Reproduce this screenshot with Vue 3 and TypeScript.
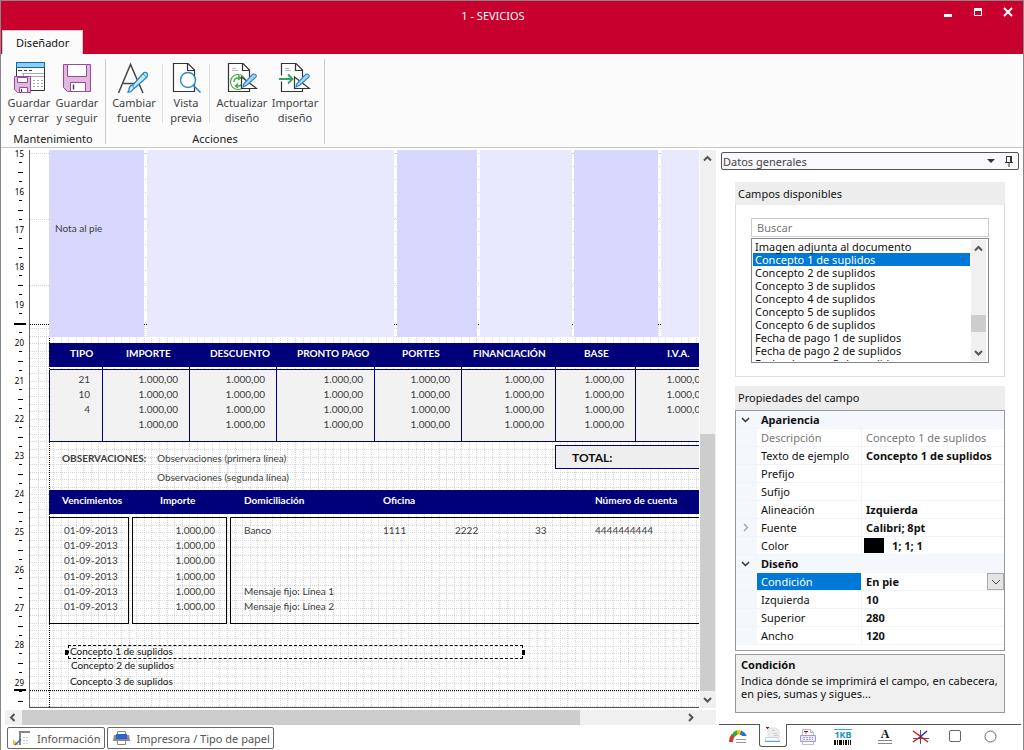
<script setup lang="ts">
import { ref } from 'vue'

interface TaxColumn { label: string; width: number; inset: number; values: string[] }
interface Label { text: string; x: number; y: number; kind?: string }
interface Prop { name: string; value: string; kind?: string }
interface Section { title: string; rows: Prop[] }

const CM = 37.8

const rulerMarks = Array.from({ length: 15 }, (_, i) => ({ n: 15 + i, y: Math.round(4 + i * CM) }))
const gridX = Array.from({ length: 260 }, (_, i) => Math.round(8 + (i * CM) / 5))
const gridY = Array.from({ length: 120 }, (_, i) => Math.round(178 + (i * CM) / 5))

const bands = [
  { x: 19, w: 95, deep: true },
  { x: 117, w: 247, deep: false },
  { x: 367, w: 80, deep: true },
  { x: 450, w: 92, deep: false },
  { x: 544, w: 84, deep: true },
  { x: 631, w: 90, deep: false },
]
const gaps = [115, 365, 448, 543, 629]

const four = ['1.000,00', '1.000,00', '1.000,00', '1.000,00']
const taxColumns: TaxColumn[] = [
  { label: 'TIPO', width: 53, inset: 21, values: ['21', '10', '4', ''] },
  { label: 'IMPORTE', width: 87, inset: 24, values: four },
  { label: 'DESCUENTO', width: 87, inset: 21, values: four },
  { label: 'PRONTO PAGO', width: 98, inset: 21, values: four },
  { label: 'PORTES', width: 87, inset: 28, values: four },
  { label: 'FINANCIACIÓN', width: 94, inset: 12, values: four },
  { label: 'BASE', width: 80, inset: 29, values: four },
  { label: 'I.V.A.', width: 82, inset: 32, values: ['1.000,00', '1.000,00', '1.000,00', ''] },
]

const labels: Label[] = [
  { text: 'Nota al pie', x: 25, y: 71 },
  { text: 'OBSERVACIONES:', x: 32, y: 301, kind: 'bold' },
  { text: 'Observaciones (primera línea)', x: 127, y: 301 },
  { text: 'Observaciones (segunda línea)', x: 127, y: 320 },
  { text: 'Vencimientos', x: 32, y: 343, kind: 'head' },
  { text: 'Importe', x: 130, y: 343, kind: 'head' },
  { text: 'Domiciliación', x: 214, y: 343, kind: 'head' },
  { text: 'Oficina', x: 353, y: 343, kind: 'head' },
  { text: 'Número de cuenta', x: 565, y: 343, kind: 'head' },
  { text: 'Banco', x: 214, y: 373 },
  { text: '1111', x: 353, y: 373 },
  { text: '2222', x: 425, y: 373 },
  { text: '33', x: 505, y: 373 },
  { text: '4444444444', x: 565, y: 373 },
  { text: 'Mensaje fijo: Línea 1', x: 214, y: 434 },
  { text: 'Mensaje fijo: Línea 2', x: 214, y: 449 },
  { text: 'Concepto 2 de suplidos', x: 41, y: 508, kind: 'ink' },
  { text: 'Concepto 3 de suplidos', x: 40, y: 524, kind: 'ink' },
]

const fields = [
  'Imagen adjunta al documento',
  'Concepto 1 de suplidos',
  'Concepto 2 de suplidos',
  'Concepto 3 de suplidos',
  'Concepto 4 de suplidos',
  'Concepto 5 de suplidos',
  'Concepto 6 de suplidos',
  'Fecha de pago 1 de suplidos',
  'Fecha de pago 2 de suplidos',
  'Fecha de pago 3 de suplidos',
]
const selected = ref(1)
const search = ref('')

const sections: Section[] = [
  {
    title: 'Apariencia',
    rows: [
      { name: 'Descripción', value: 'Concepto 1 de suplidos', kind: 'muted' },
      { name: 'Texto de ejemplo', value: 'Concepto 1 de suplidos' },
      { name: 'Prefijo', value: '' },
      { name: 'Sufijo', value: '' },
      { name: 'Alineación', value: 'Izquierda' },
      { name: 'Fuente', value: 'Calibri; 8pt', kind: 'nested' },
      { name: 'Color', value: '1; 1; 1', kind: 'color' },
    ],
  },
  {
    title: 'Diseño',
    rows: [
      { name: 'Condición', value: 'En pie', kind: 'active' },
      { name: 'Izquierda', value: '10' },
      { name: 'Superior', value: '280' },
      { name: 'Ancho', value: '120' },
    ],
  },
]
</script>

<template>
  <div class="window">
    <header class="titlebar">
      <h1 class="title">1 - SEVICIOS</h1>
      <div class="controls">
        <button aria-label="Minimizar"><svg width="12" height="12"><path d="M2 8h8v3H2z" fill="#fff" /></svg></button>
        <button aria-label="Maximizar"><svg width="12" height="12"><path d="M2.500 2.500h7v7h-7z" fill="none" stroke="#fff" /><path d="M2 2h8v3H2z" fill="#fff" /></svg></button>
        <button aria-label="Cerrar"><svg width="12" height="12"><path d="M2 2l8 8M10 2l-8 8" stroke="#fff" stroke-width="2" /></svg></button>
      </div>
      <button class="tab">Diseñador</button>
    </header>

    <nav class="ribbon">
      <section class="group">
        <div class="tools">
          <button class="tool">
            <svg class="icon" viewBox="0 0 32 32">
              <path d="M3.500 .5h28v28h-28z" fill="#fff" stroke="#333" />
              <path d="M3.500 .5h28v5h-28z" fill="#8fcdf2" stroke="#0b6cb5" />
              <path d="M5 8.500h4M11 8.500h3M16 8.500h3" stroke="#333" />
              <path d="M9 11.500h22M10.500 11v4M11 14.500h20" stroke="#aaa" />
              <path d="M20 18.500h2M24 18.500h2M28 18.500h2M20 21.500h2M24 21.500h2M28 21.500h2M20 24.500h2M24 24.500h2M28 24.500h2" stroke="#aaa" />
              <path d="M1.500 14.500h16v16H4.500l-3-3z" fill="#deb9dd" stroke="#994a9e" />
              <path d="M4.500 15.500h10v5h-10zM6.500 25.500h8v5h-8z" fill="#fff" stroke="#994a9e" />
              <path d="M8.500 27v3" stroke="#444" />
            </svg>
            <span>Guardar<br />y cerrar</span>
          </button>
          <button class="tool">
            <svg class="icon" viewBox="0 0 32 32">
              <path d="M2.500 2.500h27v27H6.500l-4-4z" fill="#deb9dd" stroke="#994a9e" />
              <path d="M6.500 2.500h19v12h-19zM9.500 20.500h15v9h-15z" fill="#fff" stroke="#994a9e" />
              <path d="M12.500 22.500v5" stroke="#444" stroke-width="1.500" />
            </svg>
            <span>Guardar<br />y seguir</span>
          </button>
        </div>
        <h2 class="caption">Mantenimiento</h2>
      </section>
      <section class="group">
        <div class="tools">
          <button class="tool">
            <svg class="icon" viewBox="0 0 32 32">
              <path d="M.5 31L12.500 2.500 25 31M5.500 21.500h15" fill="none" stroke="#444" stroke-width="1.500" />
              <path d="M27.500 10.500q3 .5 1.500 4.500L15 27.500q-2 3-5 2.500 1-1 1-3 1-4 4-4L25 11.500q1-1.500 2.500-1z" fill="#cfe8fa" stroke="#2b88cf" stroke-width="1.300" />
              <path d="M14.500 23.500l2 3M25 12l3.500 3" stroke="#2b88cf" />
            </svg>
            <span>Cambiar<br />fuente</span>
          </button>
          <i class="thin"></i>
          <button class="tool narrow">
            <svg class="icon" viewBox="0 0 32 32">
              <path d="M3.500 1.500H18L24.500 8v21.500h-21zM17.500 1.500v7h7" fill="#fff" stroke="#333" stroke-width="1.200" />
              <circle cx="18" cy="18" r="7.500" fill="#fff" stroke="#2b88cf" stroke-width="1.400" />
              <path d="M23.500 23.500l7 7" stroke="#2b88cf" stroke-width="1.600" />
            </svg>
            <span>Vista<br />previa</span>
          </button>
          <i class="thin"></i>
          <button class="tool wide">
            <svg class="icon" viewBox="0 0 32 32">
              <path d="M2.500 1.500H17L23.500 8v21.500h-21zM16.500 1.500v7h7" fill="#fff" stroke="#333" stroke-width="1.200" />
              <path d="M6 6.500h4M6 8.500h6" stroke="#bbb" />
              <circle cx="12" cy="20" r="7.500" fill="#fff" stroke="#45aa45" stroke-width="1.200" />
              <path d="M8 20q0-4 4-4h2M12 13.500l2.500 2.500-2.500 2M16 20q0 4-4 4h-2M12 21.500L9.500 24l2.500 2" fill="none" stroke="#45aa45" stroke-width="1.400" />
              <path d="M15.500 15v11.500h15z" fill="#fff" stroke="#333" stroke-width="1.200" />
              <path d="M28 12q3 .5 2 3L21 23q-2 1-4 2 0-3 2-4.500l7-7.500q.5-1 2-1z" fill="#a9d5f5" stroke="#2b88cf" stroke-width="1.200" />
            </svg>
            <span>Actualizar<br />diseño</span>
          </button>
          <button class="tool">
            <svg class="icon" viewBox="0 0 32 32">
              <path d="M2.500 1.500H17L23.500 8v21.500h-21zM16.500 1.500v7h7" fill="#fff" stroke="#333" stroke-width="1.200" />
              <path d="M6 6.500h4M6 8.500h6" stroke="#bbb" />
              <path d="M0 13.500h9v6H0z" fill="#fff" />
              <path d="M0 17h13M9 12.500l4.500 4.500L9 21.500" fill="none" stroke="#35a265" stroke-width="1.900" />
              <path d="M15.500 15v11.500h15z" fill="#fff" stroke="#333" stroke-width="1.200" />
              <path d="M28 12q3 .5 2 3L21 23q-2 1-4 2 0-3 2-4.500l7-7.500q.5-1 2-1z" fill="#a9d5f5" stroke="#2b88cf" stroke-width="1.200" />
            </svg>
            <span>Importar<br />diseño</span>
          </button>
        </div>
        <h2 class="caption">Acciones</h2>
      </section>
    </nav>

    <main class="work">
      <section class="designer">
        <div class="sheet">
          <svg class="ruler" shape-rendering="crispEdges">
            <g v-for="m in rulerMarks" :key="m.n">
              <text x="23" :y="m.y + 3" text-anchor="end">{{ m.n }}</text>
              <path :d="`M18 ${m.y + 8}h3v1h-3zM17 ${m.y + 18}h5v1h-5zM18 ${m.y + 27}h3v1h-3z`" />
            </g>
            <path d="M13 173h12v2H13zM13 539h12v2H13z" />
          </svg>

          <div class="canvas">
            <svg class="grid" shape-rendering="crispEdges">
              <line v-for="y in [3, 69, 135]" :key="'r' + y" x1="0" x2="100%" :y1="y + 0.5" :y2="y + 0.5" class="dot" />
              <line v-for="x in gaps" :key="'g' + x" :x1="x + 0.5" :x2="x + 0.5" y1="3" y2="174" class="sparse" />
              <line v-for="x in gridX" :key="'x' + x" :x1="x + 0.5" :x2="x + 0.5" y1="176" y2="100%" class="dot" />
              <line v-for="y in gridY" :key="'y' + y" x1="0" x2="100%" :y1="y + 0.5" :y2="y + 0.5" class="dot" />
              <line x1="0" x2="100%" y1="174.5" y2="174.5" class="edge" />
              <line x1="0" x2="100%" y1="540.5" y2="540.5" class="edge" />
              <line x1="19.5" x2="19.5" y1="174" y2="100%" class="edge" />
            </svg>

            <div v-for="b in bands" :key="b.x" class="band" :class="{ deep: b.deep }" :style="{ left: b.x + 'px', width: b.w + 'px' }"></div>

            <table class="taxes">
              <colgroup><col v-for="c in taxColumns" :key="c.label" :style="{ width: c.width + 'px' }" /></colgroup>
              <thead>
                <tr>
                  <th v-for="c in taxColumns" :key="c.label" :style="{ paddingLeft: c.inset + 'px' }">{{ c.label }}</th>
                </tr>
              </thead>
              <tbody>
                <tr class="joint"><td v-for="c in taxColumns" :key="c.label"></td></tr>
                <tr v-for="r in 4" :key="r">
                  <td v-for="c in taxColumns" :key="c.label">{{ c.values[r - 1] }}</td>
                </tr>
              </tbody>
            </table>

            <div class="total">TOTAL:</div>
            <div class="bar"></div>
            <div class="boxes">
              <ul class="box dates"><li v-for="n in 6" :key="n">01-09-2013</li></ul>
              <ul class="box amounts"><li v-for="n in 6" :key="n">1.000,00</li></ul>
              <div class="box rest"></div>
            </div>

            <span v-for="l in labels" :key="l.text" class="label" :class="l.kind" :style="{ left: l.x + 'px', top: l.y + 'px' }">{{ l.text }}</span>

            <div class="picked">Concepto 1 de suplidos</div>
          </div>

          <div class="vscroll">
            <svg width="15" height="17"><path d="M4 10.500L7.500 7l3.500 3.500" class="chev" /></svg>
            <div class="vtrack"><div class="vthumb"></div></div>
            <svg width="15" height="17"><path d="M4 7l3.500 3.500L11 7" class="chev" /></svg>
          </div>
        </div>

        <div class="hscroll">
          <svg width="17" height="15"><path d="M9.500 4L6 7.500 9.500 11" class="chev" /></svg>
          <div class="htrack"><div class="hthumb"></div></div>
          <svg width="17" height="15"><path d="M7 4l3.500 3.500L7 11" class="chev" /></svg>
        </div>

        <div class="sheets">
          <button>
            <svg width="18" height="16" viewBox="0 0 18 16"><path d="M5 1h12v2H8v12H6V3q0-2-1-2z" fill="#888" /><path d="M10 7.500h2M13 7.500h2M10 10.500h2M13 10.500h2M10 13.500h2M13 13.500h2" stroke="#ccc" /><path d="M0 9v6h6z" fill="#f2bd55" /><path d="M2 15l6-6" stroke="#2b6aa5" stroke-width="1.300" /></svg>
            <span>Información</span>
          </button>
          <button>
            <svg width="18" height="16" viewBox="0 0 18 16"><path d="M4.500 1.500h8v4h-8z" fill="#fff" stroke="#888" /><path d="M1 5h15l1 6H0z" fill="#888" /><path d="M3 4h11v5H3z" fill="#2e62cc" /><path d="M4.500 10.500h8v4h-8z" fill="#fff" stroke="#888" /></svg>
            <span>Impresora / Tipo de papel</span>
          </button>
        </div>
      </section>

      <aside class="side">
        <button class="picker">
          <span>Datos generales</span>
          <svg width="32" height="14"><path d="M2 5h8L6 9z" fill="#333" /><path d="M21.500 2v6M26.500 2v6M21 2.500h6M20 8.500h8M24 9v4M25.500 2v6" fill="none" stroke="#333" /></svg>
        </button>

        <section class="panel">
          <h3>Campos disponibles</h3>
          <div class="panel-body">
            <input v-model="search" type="text" placeholder="Buscar" aria-label="Buscar" />
            <div class="listbox">
              <ul role="listbox" aria-label="Campos disponibles">
                <li v-for="(f, i) in fields" :key="f" role="option" :aria-selected="i === selected" :class="{ on: i === selected }" @click="selected = i">{{ f }}</li>
              </ul>
              <div class="vscroll list">
                <svg width="15" height="17"><path d="M4 10.500L7.500 7l3.500 3.500" class="chev" /></svg>
                <div class="vtrack"><div class="lthumb"></div></div>
                <svg width="15" height="17"><path d="M4 7l3.500 3.500L11 7" class="chev" /></svg>
              </div>
            </div>
          </div>
        </section>

        <section class="panel props">
          <h3>Propiedades del campo</h3>
          <table class="pgrid">
            <colgroup><col class="c-gutter" /><col class="c-name" /><col /></colgroup>
            <tbody v-for="s in sections" :key="s.title">
              <tr class="section">
                <td class="gutter"><svg width="9" height="8"><path d="M1 2l3.500 3.500L8 2" fill="none" stroke="#333" stroke-width="1.500" /></svg></td>
                <th colspan="2">{{ s.title }}</th>
              </tr>
              <tr v-for="p in s.rows" :key="p.name" :class="p.kind">
                <td class="gutter"><svg v-if="p.kind === 'nested'" width="9" height="9"><path d="M3 1l3.500 3.500L3 8" fill="none" stroke="#aaa" stroke-width="1.500" /></svg></td>
                <td class="name">{{ p.name }}</td>
                <td class="value">
                  <div class="cell">
                    <i v-if="p.kind === 'color'" class="swatch"></i>
                    <span>{{ p.value }}</span>
                    <button v-if="p.kind === 'active'" class="drop" aria-label="Abrir lista"><svg width="10" height="8"><path d="M1 2l4 4 4-4" fill="none" stroke="#444" /></svg></button>
                  </div>
                </td>
              </tr>
            </tbody>
          </table>
          <div class="help">
            <strong>Condición</strong>
            <p>Indica dónde se imprimirá el campo, en cabecera, en pies, sumas y sigues...</p>
          </div>
        </section>

        <div class="spacer"></div>

        <div class="modes">
          <button aria-label="Datos generales">
            <svg width="18" height="16" viewBox="0 0 18 16"><path d="M2 13q0-4 2-6.500" stroke="#d33" stroke-width="4" fill="none" /><path d="M4 7q2-3 5-4" stroke="#3a3" stroke-width="4" fill="none" /><path d="M8 3.500q2-.5 4 .5" stroke="#fb0" stroke-width="4" fill="none" /><path d="M11.500 3.500q3 1 4.500 4" stroke="#27c" stroke-width="4" fill="none" /><path d="M4 15q0-6 5-8h9v8z" fill="#fff" /><path d="M7 10.500h10M7 13.500h10" stroke="#999" /></svg>
          </button>
          <button class="current" aria-label="Pie">
            <svg width="18" height="18" viewBox="0 0 18 18"><path d="M4 12V2h8l3 3v7z" fill="#eee" stroke="#ddd" /><path d="M2 1.500h3M3.500 1v2" stroke="#c00" /><path d="M8 4.500h3M9 7.500h4M10 9.500h4" stroke="#ccc" /><path d="M1.500 11.500h12l2 3.500H1.500z" fill="#fff" stroke="#c5d5ea" /><path d="M1 15.500h15" stroke="#6f9bd6" /></svg>
          </button>
          <button aria-label="Cuerpo">
            <svg width="18" height="18" viewBox="0 0 18 18"><path d="M3.500 1.500h8l3 3v12h-11zM11.500 1.500v3h3" fill="#fff" stroke="#bbb" /><path d="M5 3.500h4M7 3.500v2" stroke="#c00" /><path d="M1.500 7.500h15v6h-15z" fill="#e8e8ff" stroke="#9a9af0" /><path d="M4 9.500h10M4 11.500h10" stroke="#aaa" stroke-dasharray="2 1" /></svg>
          </button>
          <button class="code" aria-label="Código de barras"><span>1KB</span><svg width="17" height="5"><path d="M0 2.500h17" stroke="#111" stroke-width="5" stroke-dasharray="2 1 1 1 3 1 1 1" /></svg></button>
          <button class="letter" aria-label="Texto"><span>A</span><svg width="14" height="5"><path d="M0 .5h14M0 3.500h14" stroke="#888" /></svg></button>
          <button aria-label="Línea">
            <svg width="18" height="16" viewBox="0 0 18 16"><path d="M1 9.500h16M8.500 1v14" stroke="#555" /><path d="M1 2l7 5" stroke="#c11" stroke-width="1.400" /><path d="M8 7l8 6" stroke="#c11" stroke-width="1.400" /><path d="M15 2L8 8" stroke="#22c" stroke-width="1.400" /><path d="M8 8l-7 5" stroke="#c11" stroke-width="1.400" /></svg>
          </button>
          <button aria-label="Rectángulo"><svg width="13" height="13"><rect x=".5" y=".5" width="11" height="11" rx="1.500" fill="#fff" stroke="#666" /></svg></button>
          <button aria-label="Elipse"><svg width="13" height="13"><circle cx="6.500" cy="6.500" r="5.500" fill="#fff" stroke="#666" /></svg></button>
          <i class="tail"></i>
        </div>
      </aside>
    </main>
  </div>
</template>

<style>
body { margin: 0; background: #fff; }
</style>

<style scoped>
.window, .window * { box-sizing: border-box; }
.window {
  height: 100vh;
  min-height: 750px;
  display: flex;
  flex-direction: column;
  border: 1px solid #888;
  border-bottom: 0;
  background: #fff;
  color: #111;
  font: 11px/15px "Noto Sans", "Open Sans", sans-serif;
}
button { font: inherit; color: inherit; border: 0; padding: 0; background: none; }
h1, h2, h3, p, ul { margin: 0; padding: 0; font-weight: normal; list-style: none; }
svg { display: block; flex: none; }

.titlebar {
  display: grid;
  grid-template-columns: 1fr auto 1fr;
  grid-template-rows: 29px 24px;
  align-items: center;
  background: #c8002d;
}
.title { grid-column: 2; color: #fff; font-size: 11px; margin-right: 38px; }
.controls { grid-column: 3; justify-self: end; align-self: start; display: flex; gap: 18px; padding: 5px 9px 0 0; }
.tab {
  grid-column: 1;
  justify-self: start;
  height: 24px;
  margin-left: 1px;
  padding: 0 13px;
  background: #fbfbfb;
  border: 1px solid #ccc;
  border-width: 1px 1px 0;
}

.ribbon { display: flex; height: 94px; background: #fbfbfb; border-bottom: 1px solid #c6c6c6; padding: 5px 0 3px; flex: none; }
.group { display: flex; flex-direction: column; border-right: 1px solid #ccc; padding: 3px 4px 0; color: #222; }
.group + .group { padding: 3px 0 0; }
.tools { display: flex; }
.tool { width: 48px; color: #444; white-space: nowrap; display: flex; flex-direction: column; align-items: center; gap: 1px; }
.group + .group .tool { width: 56px; }
.group + .group .narrow { width: 46px; }
.group + .group .wide { width: 64px; }
.group + .group .wide + .tool { width: 50px; padding-right: 8px; }
.icon { width: 32px; height: 32px; }
.thin { width: 1px; height: 59px; margin-top: 2px; background: #ddd; }
.caption { font-size: 11px; text-align: center; margin-top: 6px; }

.work { display: flex; flex: 1; min-height: 0; }
.designer { flex: 1; min-width: 0; display: flex; flex-direction: column; padding: 2px 0 1px; }
.sheet { flex: 1; min-height: 0; display: flex; }
.ruler { width: 28px; height: 100%; font: 8px "Noto Sans", sans-serif; overflow: hidden; }
.canvas {
  flex: 1;
  position: relative;
  overflow: hidden;
  border-left: 1px solid #666;
  border-bottom: 1px solid #555;
  color: #404040;
  font: 10px/15px Lato, Carlito, sans-serif;
  white-space: nowrap;
}
.grid { position: absolute; inset: 0; width: 100%; height: 100%; }
.dot { stroke: #d6d6d6; stroke-dasharray: 1 1; }
.sparse { stroke: #ccc; stroke-dasharray: 1 12; }
.edge { stroke: #000; stroke-dasharray: 1 1; }
.band { position: absolute; top: 0; height: 187px; background: #e8e8ff; }
.band.deep { background: #d8d8ff; }

.taxes { position: absolute; left: 19px; top: 193px; width: 668px; table-layout: fixed; border-spacing: 0; }
.taxes th { height: 24px; padding: 0 0 4px; background: #00007b; color: #fff; text-align: left; font-weight: bold; }
.taxes td { height: 15px; padding: 0 11px 0 0; line-height: 15px; border-left: 1px solid #00007b; background: #f2f2f2; text-align: right; vertical-align: top; }
.taxes td:first-child { padding-right: 12px; }
.taxes .joint td { height: 3px; line-height: 0; background: none; border-bottom: 1px solid #00007b; }
.taxes .joint td:first-child { border-left-color: transparent; }
.taxes .joint + tr td { height: 17px; vertical-align: bottom; }
.taxes tbody tr:last-child td { height: 25px; border-bottom: 1px solid #00007b; }

.total { position: absolute; left: 525px; right: -1px; top: 295px; height: 24px; padding-left: 16px; border: 1px solid #00007b; background: #eee; color: #111; font-size: 12px; line-height: 24px; font-weight: bold; }
.bar { position: absolute; left: 19px; right: 0; top: 340px; height: 24px; background: #00007b; }
.boxes { position: absolute; left: 19px; right: -1px; top: 367px; height: 107px; display: flex; gap: 3px; }
.box { border: 1px solid #000; padding-top: 5px; }
.box li:nth-child(4) { margin-top: 1px; }
.dates { width: 80px; padding-left: 14px; }
.amounts { width: 95px; padding-right: 11px; text-align: right; }
.rest { flex: 1; }
.label { position: absolute; }
.bold { font-weight: bold; }
.head { color: #fff; font-weight: bold; }
.ink { color: #111; }
.picked { position: absolute; left: 38px; top: 495px; width: 455px; height: 14px; padding-left: 1px; line-height: 11px; color: #111; border: 1px dashed #000; }
.picked::before, .picked::after { content: ""; position: absolute; top: 4px; width: 3px; height: 5px; background: #000; }
.picked::before { left: -4px; }
.picked::after { right: -3px; }

.chev { fill: none; stroke: #555; stroke-width: 2; }
.vscroll { width: 16px; margin-left: 1px; background: #f0f0f0; display: flex; flex-direction: column; align-items: flex-start; }
.vtrack { flex: 1; width: 15px; display: flex; flex-direction: column; justify-content: flex-end; }
.vthumb { height: 49%; background: #cdcdcd; }
.hscroll { display: flex; height: 15px; margin: 2px 0 0 4px; padding-right: 17px; background: #f0f0f0; }
.htrack { flex: 1; }
.hthumb { width: 84.5%; height: 15px; background: #cdcdcd; }
.sheets { display: flex; gap: 2px; padding: 2px 0 0 6px; color: #555; }
.sheets button { display: flex; align-items: center; gap: 6px; height: 22px; padding: 0 3px 0 5px; border: 1px solid #666; border-radius: 2px; }

.side { width: 307px; display: flex; flex-direction: column; padding: 4px 2px 2px 3px; flex: none; }
.picker { height: 18px; margin: 0 2px; padding: 0 1px; border: 1px solid #555; border-radius: 2px; background: #f8f8fd; color: #444; display: flex; align-items: center; justify-content: space-between; }
.panel { margin: 12px 16px 0; }
.panel h3 { height: 23px; padding-left: 3px; background: #ededed; font-size: 11px; line-height: 24px; }
.panel-body { border: 1px solid #ddd; border-top: 0; height: 172px; padding: 13px 15px 0; }
.panel-body input { display: block; width: 100%; height: 19px; padding: 0 5px; border: 1px solid #ccc; font: inherit; outline: 0; }
.panel-body input::placeholder { color: #777; opacity: 1; }
.listbox { display: flex; height: 125px; margin-top: 1px; border: 1px solid #828790; padding: 1px; }
.listbox ul { flex: 1; overflow: hidden; }
.listbox li { height: 13px; padding-left: 2px; line-height: 13px; white-space: nowrap; }
.listbox .on { background: #0078d7; color: #fff; }
.list { width: 15px; margin-right: 1px; }
.lthumb { height: 17px; margin-bottom: 12px; background: #cdcdcd; }
.panel.props { margin-top: 9px; }
.props h3 { height: 24px; }
.pgrid { width: 100%; table-layout: fixed; border-spacing: 0; border: 1px solid #999; padding-bottom: 5px; }
.pgrid tr > * { height: 18px; padding: 0 0 0 4px; line-height: 17px; text-align: left; white-space: nowrap; border-bottom: 1px solid #f0f3f9; }
.c-gutter { width: 21px; }
.c-name { width: 105px; }
.pgrid .gutter { padding: 0 0 0 5px; background: #f4f7fc; }
.pgrid .section th { background: #f4f7fc; font-weight: bold; }
.pgrid .name { border-right: 1px solid #f0f3f9; }
.pgrid .value { font-weight: bold; }
.pgrid .muted td { color: #777; font-weight: normal; }
.cell { display: flex; align-items: center; height: 17px; }
.swatch { width: 20px; height: 15px; margin: 0 8px 0 -2px; background: #000; }
.active .name { background: #0078d7; color: #fff; }
.drop { margin-left: auto; width: 17px; height: 17px; border: 1px solid #aaa; background: #e4e4e4; display: grid; place-items: center; }
.help { height: 59px; margin-top: 3px; padding: 2px 4px 2px 5px; border: 1px solid #999; background: #f0f0f0; line-height: 13px; }
.help strong { display: block; line-height: 15px; margin-bottom: 2px; }
.spacer { flex: 1; }
.modes { display: flex; height: 24px; }
.modes button { width: 35px; height: 24px; border-top: 1px solid #555; display: grid; place-content: center; justify-items: center; flex: none; }
.modes button:first-child { width: 40px; padding-right: 2px; }
.modes .current { width: 28px; height: 23px; border: 1px solid #555; border-top: 0; border-radius: 0 0 3px 3px; }
.modes .current + button { width: 42px; }
.modes .code { width: 28px; line-height: 10px; font-weight: bold; font-size: 9px; color: #1492c0; }
.code span { border-top: 1px solid #28b4e0; }
.modes .letter { width: 46px; padding-left: 10px; font: bold 12px/11px "Liberation Serif", serif; color: #111; }
.tail { flex: 1; border-top: 1px solid #555; }
</style>
